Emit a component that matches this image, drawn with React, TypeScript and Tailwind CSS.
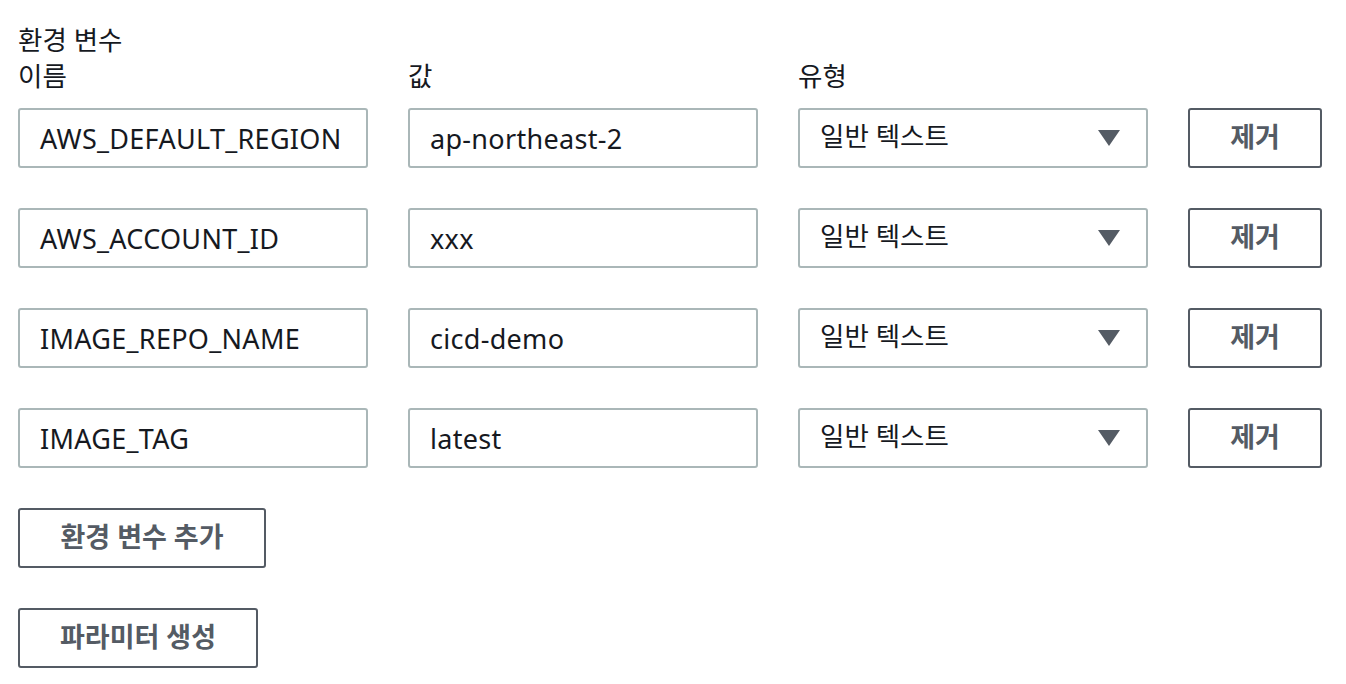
import React from "react";

const rows = [
  { name: "AWS_DEFAULT_REGION", value: "ap-northeast-2" },
  { name: "AWS_ACCOUNT_ID", value: "xxx" },
  { name: "IMAGE_REPO_NAME", value: "cicd-demo" },
  { name: "IMAGE_TAG", value: "latest" },
];

const font = {
  fontFamily: '"Noto Sans", "Noto Sans CJK KR", sans-serif',
};

const App: React.FC = () => {
  return (
    <div
      className="w-[1346px] h-[684px] bg-white text-[#16191f] pl-[18px] pt-[22px]"
      style={font}
    >
      <div className="text-[26.5px] leading-[36px]">환경 변수</div>
      <div className="flex text-[26.5px] leading-[36px] mb-[14px]">
        <div className="w-[390px]">이름</div>
        <div className="w-[390px]">값</div>
        <div>유형</div>
      </div>
      <div className="flex flex-col gap-[40px]">
        {rows.map((row) => (
          <div key={row.name} className="flex items-center">
            <div className="w-[350px] h-[60px] border-2 border-[#aab7b8] rounded-[3px] flex items-center px-[20px] pt-[3px] text-[27px] tracking-[0.3px] mr-[40px]">
              {row.name}
            </div>
            <div className="w-[350px] h-[60px] border-2 border-[#aab7b8] rounded-[3px] flex items-center px-[20px] pt-[3px] text-[27px] tracking-[0.3px] mr-[40px]">
              {row.value}
            </div>
            <div className="w-[350px] h-[60px] border-2 border-[#aab7b8] rounded-[3px] flex items-center justify-between pl-[20px] pr-[26px] text-[26.5px] mr-[40px]">
              <span className="-mt-[2px]">일반 텍스트</span>
              <svg width="22" height="16" viewBox="0 0 22 16">
                <polygon points="0,0 22,0 11,16" fill="#545b64" />
              </svg>
            </div>
            <button className="w-[134px] h-[60px] border-2 border-[#545b64] rounded-[3px] text-[#545b64] font-bold text-[27px] flex items-center justify-center">
              <span className="-mt-[2px]">제거</span>
            </button>
          </div>
        ))}
        <button className="w-[248px] h-[60px] border-2 border-[#545b64] rounded-[3px] text-[#545b64] font-bold text-[27px] flex items-center justify-center">
          <span className="-mt-[2px]">환경 변수 추가</span>
        </button>
        <button className="w-[240px] h-[60px] border-2 border-[#545b64] rounded-[3px] text-[#545b64] font-bold text-[27px] flex items-center justify-center">
          <span className="-mt-[2px]">파라미터 생성</span>
        </button>
      </div>
    </div>
  );
};

export default App;
